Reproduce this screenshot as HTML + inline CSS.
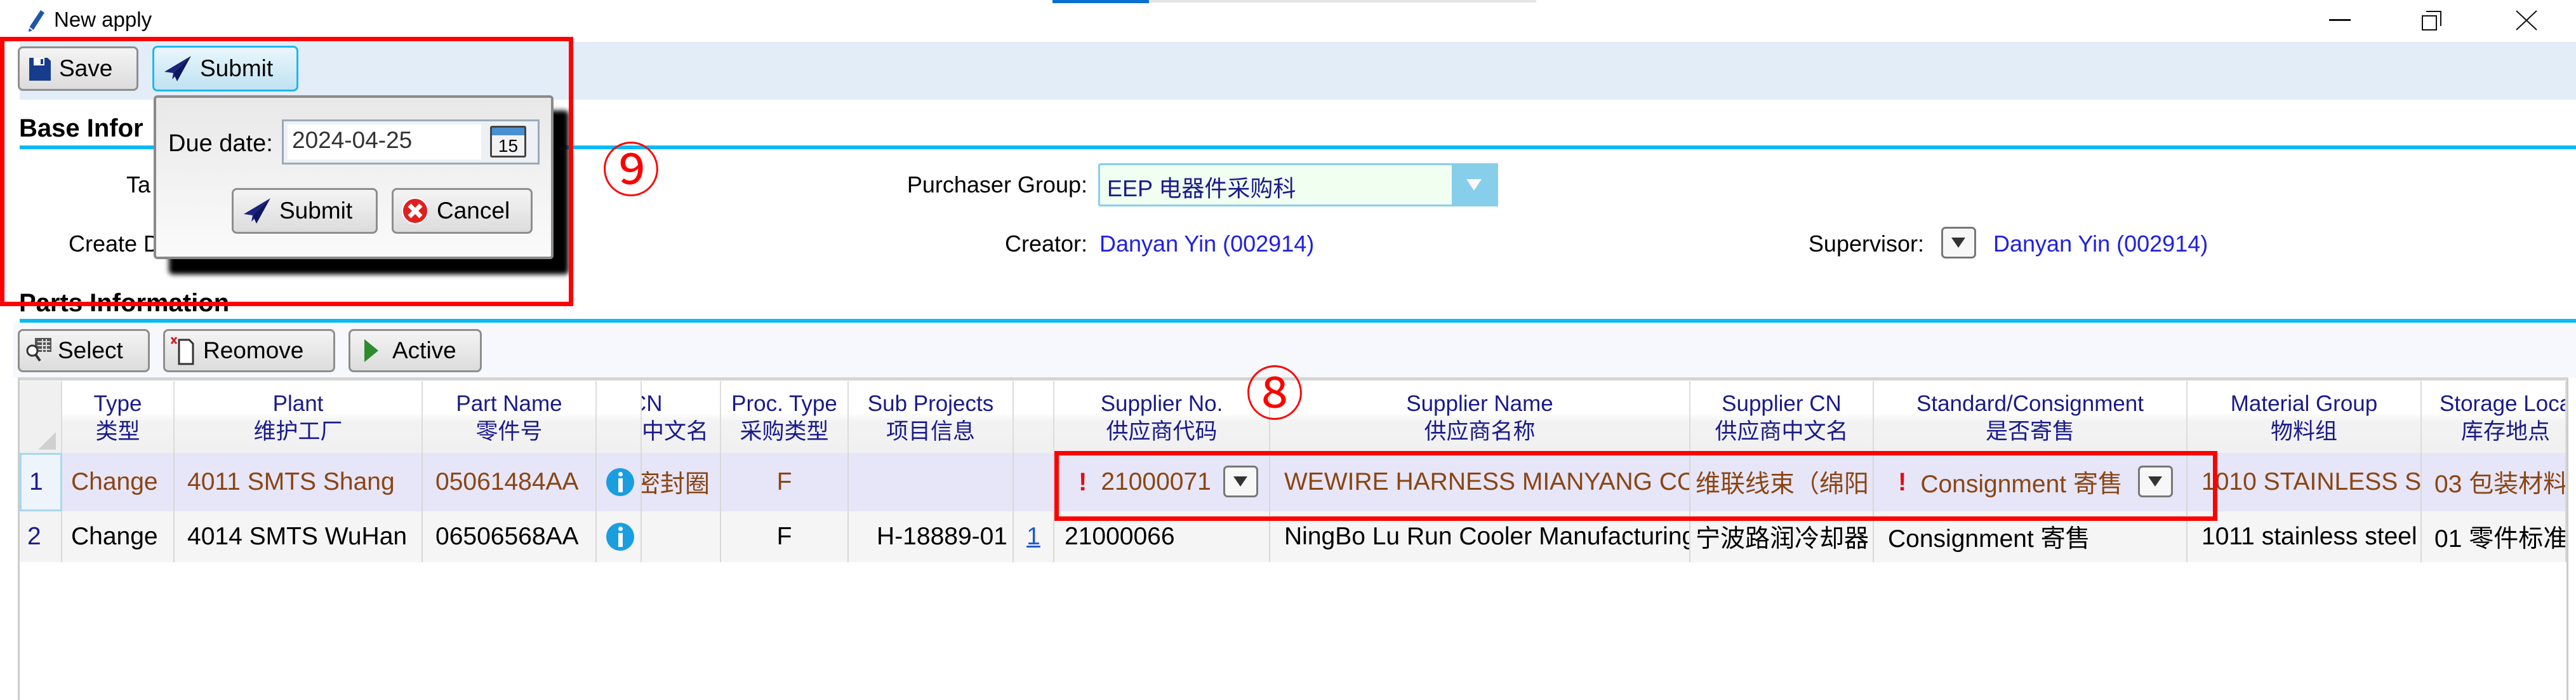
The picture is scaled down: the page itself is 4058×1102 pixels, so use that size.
<!DOCTYPE html>
<html><head><meta charset="utf-8">
<style>
*{margin:0;padding:0;box-sizing:border-box}
body{width:4058px;height:1102px;position:relative;overflow:hidden;background:#fff;font-family:"Liberation Sans","Noto Sans CJK SC",sans-serif;font-size:36px;color:#000}
.a{position:absolute;white-space:nowrap}
.btn{position:absolute;border:3px solid #8e8e8e;border-radius:8px;background:linear-gradient(#f4f4f4,#dcdcdc);display:flex;align-items:center;gap:12px;padding-left:14px;font-size:37px}
.cell{position:absolute;overflow:hidden;white-space:nowrap;display:flex;align-items:center;border-right:2px solid #d8d8d8;font-size:39px}
.hd{position:absolute;top:600px;height:113px;overflow:hidden;white-space:nowrap;border-right:2px solid #dcdcdc;color:#1a1a8a;font-size:35px;text-align:center;line-height:44px;padding-top:14px;background:linear-gradient(#fff 0,#fff 45%,#f3f3f3 55%,#f0f0f0)}
.r1{top:713px;height:92px;background:#e6e6f8;color:#8b4513}
.r2{top:805px;height:80px;background:#f5f5f5;color:#000}
.dd{position:absolute;width:55px;height:50px;border:3px solid #777;border-radius:7px;background:#f7f7f7}
.dd:after{content:"";position:absolute;left:13px;top:14px;border-left:11px solid transparent;border-right:11px solid transparent;border-top:16px solid #333}
.info{display:inline-block;width:44px;height:44px;border-radius:50%;background:#1a9ee0;position:relative}
.info:before{content:"";position:absolute;left:19px;top:6px;width:7px;height:7px;background:#fff;border-radius:50%}
.info:after{content:"";position:absolute;left:19px;top:16px;width:7px;height:22px;background:#fff}
.ex{color:#e01010;font-weight:bold;font-size:40px;margin-right:22px}
</style></head><body>

<svg class="a" style="left:42px;top:14px" width="30" height="38" viewBox="0 0 30 38"><path d="M22 2 L28 6 L10 34 L3 36 L4 29 Z" fill="#1e56a8"/><path d="M4 29 L10 34" stroke="#fff" stroke-width="2"/></svg>
<div class="a" style="left:85px;top:12px;font-size:33px">New apply</div>
<div class="a" style="left:1658px;top:0;width:152px;height:5px;background:#0a6fd0"></div>
<div class="a" style="left:1810px;top:0;width:610px;height:4px;background:#e4e4e4"></div>
<div class="a" style="left:3669px;top:30px;width:34px;height:3px;background:#111"></div>
<div class="a" style="left:3815px;top:24px;width:24px;height:24px;border:2px solid #111"></div>
<div class="a" style="left:3822px;top:17px;width:24px;height:24px;border-top:2px solid #111;border-right:2px solid #111"></div>
<svg class="a" style="left:3962px;top:16px" width="36" height="32"><path d="M2 1 L34 31 M34 1 L2 31" stroke="#111" stroke-width="2"/></svg>

<div class="a" style="left:31px;top:66px;width:4027px;height:91px;background:#e3edf8"></div>
<div class="btn" style="left:28px;top:73px;width:190px;height:70px">
<svg width="36" height="40" viewBox="0 0 36 40"><path d="M1 3 H30 L35 8 V39 H1 Z" fill="#183c8c"/><rect x="8" y="3" width="17" height="12" fill="#fff"/><rect x="19" y="5" width="4" height="8" fill="#183c8c"/></svg>Save</div>
<div class="btn" style="left:240px;top:72px;width:230px;height:72px;border-color:#1fb7f0;background:linear-gradient(#eaf6fc,#bfe2f2)">
<svg width="46" height="42" viewBox="0 0 46 42"><path d="M44 1 L2 26 L16 28 Z" fill="#1a237e"/><path d="M44 1 L16 28 L22 41 Z" fill="#0d1760"/><path d="M16 28 L14 38 L19 33 Z" fill="#1a237e"/></svg>Submit</div>

<div class="a" style="left:30px;top:180px;font-size:40px;font-weight:bold">Base Infor</div>
<div class="a" style="left:31px;top:229px;width:4027px;height:6px;background:#0abaf5"></div>
<div class="a" style="left:199px;top:270px">Ta</div>
<div class="a" style="left:108px;top:363px">Create D</div>
<div class="a" style="left:1400px;top:270px;width:313px;text-align:right">Purchaser Group:</div>
<div class="a" style="left:1730px;top:257px;width:630px;height:68px;border:3px solid #87ceeb;background:#f0fff0;border-radius:3px"></div>
<div class="a" style="left:2287px;top:257px;width:73px;height:68px;background:#87ceeb"></div>
<div class="a" style="left:2310px;top:282px;border-left:12px solid transparent;border-right:12px solid transparent;border-top:18px solid #fff8f8"></div>
<div class="a" style="left:1744px;top:268px;color:#1a1a8a">EEP 电器件采购科</div>
<div class="a" style="left:1500px;top:363px;width:213px;text-align:right">Creator:</div>
<div class="a" style="left:1732px;top:363px;color:#2020e0">Danyan Yin (002914)</div>
<div class="a" style="left:2800px;top:363px;width:231px;text-align:right">Supervisor:</div>
<div class="dd" style="left:3058px;top:357px"></div>
<div class="a" style="left:3140px;top:363px;color:#2020e0">Danyan Yin (002914)</div>

<div class="a" style="left:30px;top:455px;font-size:40px;font-weight:bold">Parts Information</div>
<div class="a" style="left:31px;top:502px;width:4027px;height:6px;background:#0abaf5"></div>
<div class="a" style="left:20px;top:509px;width:4038px;height:86px;background:#f6f8fd"></div>
<div class="btn" style="left:28px;top:518px;width:208px;height:68px;gap:8px;padding-left:8px">
<svg width="44" height="44" viewBox="0 0 44 44"><rect x="16" y="2" width="26" height="22" fill="#555"/><path d="M20 8H40M20 14H40M20 20H40M28 4V24M34 4V24" stroke="#ddd" stroke-width="2"/><circle cx="12" cy="22" r="8" fill="#fff" stroke="#333" stroke-width="3"/><path d="M17 28 L24 38" stroke="#333" stroke-width="4"/></svg>Select</div>
<div class="btn" style="left:257px;top:518px;width:271px;height:68px;gap:8px;padding-left:8px">
<svg width="44" height="46" viewBox="0 0 44 46"><path d="M2 2 L10 12 M10 2 L2 12" stroke="#d02020" stroke-width="3"/><path d="M14 6 H30 L36 12 V44 H14 Z" fill="#fff" stroke="#333" stroke-width="3"/></svg>Reomove</div>
<div class="btn" style="left:549px;top:518px;width:210px;height:68px;gap:20px;padding-left:20px">
<svg width="26" height="40"><path d="M2 2 L24 20 L2 38 Z" fill="#2e8b2e"/></svg>Active</div>

<div class="a" style="left:28px;top:594px;width:4018px;height:508px;border-left:3px solid #ccc;border-top:5px solid #d4d4d4;border-right:3px solid #ccc"></div>
<div class="hd" style="left:31px;width:67px;background:#f0f0f0"></div>
<div class="a" style="left:60px;top:680px;border-left:28px solid transparent;border-bottom:28px solid #d0d0d0"></div>
<div class="hd" style="left:98px;width:177px">Type<br>类型</div>
<div class="hd" style="left:275px;width:391px">Plant<br>维护工厂</div>
<div class="hd" style="left:666px;width:274px">Part Name<br>零件号</div>
<div class="hd" style="left:940px;width:71px"></div>
<div class="hd" style="left:1011px;width:125px;text-align:left"><span style="margin-left:-18px">CN</span><br>中文名</div>
<div class="hd" style="left:1136px;width:201px">Proc. Type<br>采购类型</div>
<div class="hd" style="left:1337px;width:260px">Sub Projects<br>项目信息</div>
<div class="hd" style="left:1597px;width:64px"></div>
<div class="hd" style="left:1661px;width:340px">Supplier No.<br>供应商代码</div>
<div class="hd" style="left:2001px;width:662px">Supplier Name<br>供应商名称</div>
<div class="hd" style="left:2663px;width:289px">Supplier CN<br>供应商中文名</div>
<div class="hd" style="left:2952px;width:494px">Standard/Consignment<br>是否寄售</div>
<div class="hd" style="left:3446px;width:369px">Material Group<br>物料组</div>
<div class="hd" style="left:3815px;width:228px;text-align:left;padding-left:28px">Storage Location<br><span style="margin-left:34px">库存地点</span></div>

<div class="cell r1" style="left:31px;width:67px;border:3px solid #a8d8f0;background:#eef4fb;color:#1a1a8a;padding-left:12px">1</div>
<div class="cell r1" style="left:98px;width:177px;padding-left:14px">Change</div>
<div class="cell r1" style="left:275px;width:391px;padding-left:20px">4011 SMTS Shang</div>
<div class="cell r1" style="left:666px;width:274px;padding-left:20px">05061484AA</div>
<div class="cell r1" style="left:940px;width:71px;padding-left:15px"><span class="info"></span></div>
<div class="cell r1" style="left:1011px;width:125px"><span style="margin-left:-10px">密封圈</span></div>
<div class="cell r1" style="left:1136px;width:201px;justify-content:center">F</div>
<div class="cell r1" style="left:1337px;width:260px"></div>
<div class="cell r1" style="left:1597px;width:64px"></div>
<div class="cell r1" style="left:1661px;width:340px;padding-left:38px"><span class="ex">!</span>21000071</div>
<div class="dd" style="left:1927px;top:733px"></div>
<div class="cell r1" style="left:2001px;width:662px;padding-left:22px">WEWIRE HARNESS MIANYANG CO</div>
<div class="cell r1" style="left:2663px;width:289px;padding-left:8px">维联线束（绵阳</div>
<div class="cell r1" style="left:2952px;width:494px;padding-left:38px"><span class="ex">!</span>Consignment 寄售</div>
<div class="dd" style="left:3368px;top:733px"></div>
<div class="cell r1" style="left:3446px;width:369px;padding-left:22px">1010 STAINLESS STEEL</div>
<div class="cell r1" style="left:3815px;width:228px;padding-left:20px">03 包装材料库</div>

<div class="cell r2" style="left:31px;width:67px;color:#1a1a8a;padding-left:12px;background:#f3f3f3">2</div>
<div class="cell r2" style="left:98px;width:177px;padding-left:14px">Change</div>
<div class="cell r2" style="left:275px;width:391px;padding-left:20px">4014 SMTS WuHan</div>
<div class="cell r2" style="left:666px;width:274px;padding-left:20px">06506568AA</div>
<div class="cell r2" style="left:940px;width:71px;padding-left:15px"><span class="info"></span></div>
<div class="cell r2" style="left:1011px;width:125px"></div>
<div class="cell r2" style="left:1136px;width:201px;justify-content:center">F</div>
<div class="cell r2" style="left:1337px;width:260px;justify-content:flex-end;padding-right:8px">H-18889-01</div>
<div class="cell r2" style="left:1597px;width:64px;justify-content:center;color:#1e5ad0;text-decoration:underline">1</div>
<div class="cell r2" style="left:1661px;width:340px;padding-left:16px">21000066</div>
<div class="cell r2" style="left:2001px;width:662px;padding-left:22px">NingBo Lu Run Cooler Manufacturing</div>
<div class="cell r2" style="left:2663px;width:289px;padding-left:8px">宁波路润冷却器</div>
<div class="cell r2" style="left:2952px;width:494px;padding-left:22px">Consignment 寄售</div>
<div class="cell r2" style="left:3446px;width:369px;padding-left:22px">1011 stainless steel</div>
<div class="cell r2" style="left:3815px;width:228px;padding-left:20px">01 零件标准库</div>

<div class="a" style="left:242px;top:150px;width:630px;height:258px;border:4px solid #8a8a8a;border-radius:6px;background:linear-gradient(#e8e8e8,#fbfbfb);box-shadow:24px 24px 8px #000"></div>
<div class="a" style="left:265px;top:205px;font-size:38px">Due date:</div>
<div class="a" style="left:444px;top:188px;width:406px;height:71px;border:3px solid #9aaabb;background:#eef1f4"></div>
<div class="a" style="left:453px;top:196px;width:305px;height:55px;background:#fff"></div>
<div class="a" style="left:460px;top:200px;font-size:37px;color:#333">2024-04-25</div>
<div class="a" style="left:772px;top:198px;width:57px;height:50px;border:3px solid #444;border-radius:3px;background:#f2f2f2;font-size:28px;text-align:center;padding-top:12px;line-height:34px">15</div>
<div class="a" style="left:775px;top:201px;width:51px;height:12px;background:#4a90d0"></div>
<div class="btn" style="left:365px;top:296px;width:230px;height:72px">
<svg width="46" height="42" viewBox="0 0 46 42"><path d="M44 1 L2 26 L16 28 Z" fill="#1a237e"/><path d="M44 1 L16 28 L22 41 Z" fill="#0d1760"/><path d="M16 28 L14 38 L19 33 Z" fill="#1a237e"/></svg>Submit</div>
<div class="btn" style="left:617px;top:296px;width:222px;height:72px;padding-left:12px">
<svg width="44" height="44" viewBox="0 0 44 44"><circle cx="22" cy="22" r="20" fill="#e02020" stroke="#fff" stroke-width="2"/><path d="M13 13 L31 31 M31 13 L13 31" stroke="#fff" stroke-width="7"/></svg>Cancel</div>

<div class="a" style="left:0;top:58px;width:903px;height:424px;border:7px solid #f00"></div>
<div class="a" style="left:948px;top:220px;font-size:92px;color:#f00;line-height:100px">⑨</div>
<div class="a" style="left:1661px;top:710px;width:1832px;height:110px;border:7px solid #f00"></div>
<div class="a" style="left:1962px;top:572px;font-size:92px;color:#f00;line-height:100px">⑧</div>
</body></html>
